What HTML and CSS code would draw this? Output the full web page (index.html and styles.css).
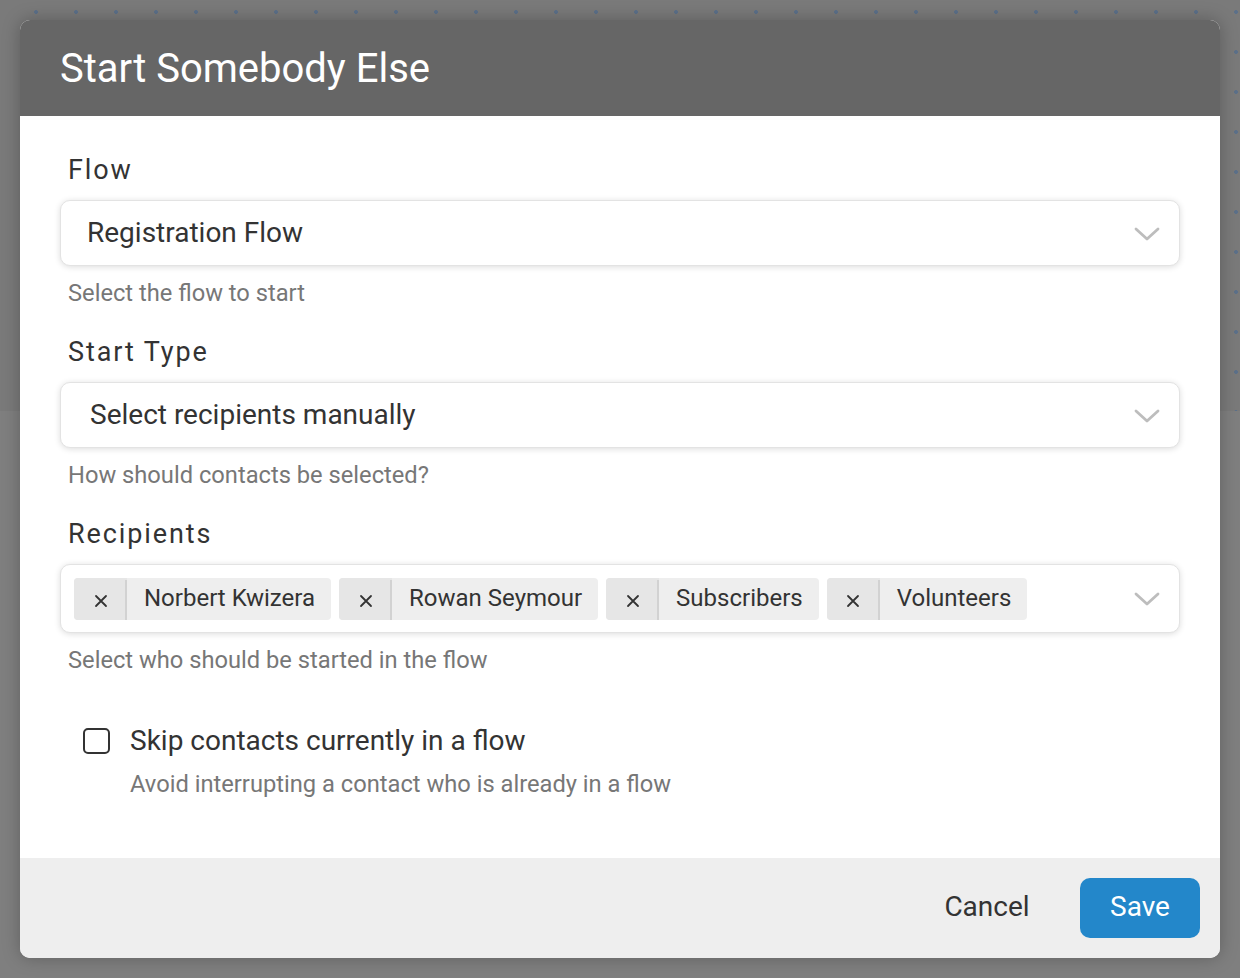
FILE: index.html
```html
<!DOCTYPE html>
<html>
<head>
<meta charset="utf-8">
<link rel="stylesheet" href="styles.css">
</head>
<body>
<div class="dialog">
  <div class="dialog-header">Start Somebody Else</div>
  <div class="dialog-body">
    <div class="field">
      <div class="field-label">Flow</div>
      <div class="select">
        <span class="select-value">Registration Flow</span>
        <svg class="chevron" width="26" height="15" viewBox="0 0 26 15"><polyline points="2,2 13,12 24,2" fill="none" stroke="#bdbdbd" stroke-width="2.8" stroke-linecap="round" stroke-linejoin="round"/></svg>
      </div>
      <div class="help">Select the flow to start</div>
    </div>
    <div class="field">
      <div class="field-label">Start Type</div>
      <div class="select">
        <span class="select-value alt">Select recipients manually</span>
        <svg class="chevron" width="26" height="15" viewBox="0 0 26 15"><polyline points="2,2 13,12 24,2" fill="none" stroke="#bdbdbd" stroke-width="2.8" stroke-linecap="round" stroke-linejoin="round"/></svg>
      </div>
      <div class="help">How should contacts be selected?</div>
    </div>
    <div class="field">
      <div class="field-label">Recipients</div>
      <div class="select multi">
        <div class="chips">
          <div class="chip"><span class="chip-x"><svg width="14" height="14" viewBox="0 0 14 14"><path d="M2 2L12 12M12 2L2 12" stroke="#333" stroke-width="1.8" stroke-linecap="round"/></svg></span><span class="chip-text">Norbert Kwizera</span></div>
          <div class="chip"><span class="chip-x"><svg width="14" height="14" viewBox="0 0 14 14"><path d="M2 2L12 12M12 2L2 12" stroke="#333" stroke-width="1.8" stroke-linecap="round"/></svg></span><span class="chip-text">Rowan Seymour</span></div>
          <div class="chip"><span class="chip-x"><svg width="14" height="14" viewBox="0 0 14 14"><path d="M2 2L12 12M12 2L2 12" stroke="#333" stroke-width="1.8" stroke-linecap="round"/></svg></span><span class="chip-text">Subscribers</span></div>
          <div class="chip"><span class="chip-x"><svg width="14" height="14" viewBox="0 0 14 14"><path d="M2 2L12 12M12 2L2 12" stroke="#333" stroke-width="1.8" stroke-linecap="round"/></svg></span><span class="chip-text">Volunteers</span></div>
        </div>
        <svg class="chevron" width="26" height="15" viewBox="0 0 26 15"><polyline points="2,2 13,12 24,2" fill="none" stroke="#bdbdbd" stroke-width="2.8" stroke-linecap="round" stroke-linejoin="round"/></svg>
      </div>
      <div class="help">Select who should be started in the flow</div>
    </div>
    <div class="check-field">
      <div class="check-row">
        <span class="checkbox"></span>
        <span class="check-label">Skip contacts currently in a flow</span>
      </div>
      <div class="help check-help">Avoid interrupting a contact who is already in a flow</div>
    </div>
  </div>
  <div class="dialog-footer">
    <button class="btn btn-cancel">Cancel</button>
    <button class="btn btn-save">Save</button>
  </div>
</div>
</body>
</html>
```
FILE: styles.css
```css
* { box-sizing: border-box; }
html, body { margin: 0; padding: 0; }
body {
  width: 1240px;
  height: 978px;
  padding: 20px;
  font-family: Roboto, "Liberation Sans", sans-serif;
  background-color: #7a7a7a;
  background-image:
    linear-gradient(transparent 0 411px, #7f7f7f 411px),
    radial-gradient(circle at 20px 20px, #5c7089 0 1.6px, transparent 2.2px);
  background-size: 100% 100%, 40px 40px;
  background-position: 0 0, 16px -8px;
  background-repeat: no-repeat, repeat;
  overflow: hidden;
}
.dialog {
  width: 1200px;
  height: 938px;
  background: #fff;
  border-radius: 10px;
  overflow: hidden;
  display: flex;
  flex-direction: column;
  box-shadow: 0 0 18px rgba(0,0,0,0.25);
}
.dialog-header {
  height: 96px;
  flex: none;
  background: #666666;
  color: #fff;
  font-size: 40px;
  padding-left: 40px;
  display: flex;
  align-items: center;
}
.dialog-body {
  flex: 1;
  padding: 38px 40px 0 40px;
}
.field { margin-bottom: 29px; }
.field-label {
  font-size: 27px;
  line-height: 32px;
  letter-spacing: 1.9px;
  color: #333;
  padding-left: 8px;
  margin-bottom: 14px;
}
.select {
  height: 66px;
  border: 1px solid #e3e3e3;
  border-radius: 10px;
  box-shadow: 0 1px 6px rgba(0,0,0,0.14);
  display: flex;
  align-items: center;
  padding: 0 19px 0 26px;
  background: #fff;
}
.select.multi { height: 69px; padding-left: 13px; }
.select-value {
  flex: 1;
  font-size: 28px;
  line-height: 32px;
  padding-bottom: 1px;
  color: #333;
}
.select-value.alt { padding-left: 3px; }
.chevron { flex: none; margin-top: 2px; }
.chips { flex: 1; display: flex; gap: 8px; }
.chip {
  height: 42px;
  display: flex;
  border-radius: 4px;
  overflow: hidden;
  background: #eeeeee;
}
.chip-x {
  width: 53px;
  background: #e6e6e6;
  display: flex;
  align-items: center;
  justify-content: center;
  position: relative;
}
.chip-x::after {
  content: "";
  position: absolute;
  right: 0; top: 2px; bottom: 0;
  width: 2px;
  background: #d2d2d2;
}
.chip-x svg { margin-top: 4px; }
.chip-text {
  display: flex;
  align-items: center;
  padding: 0 16px 1px 17px;
  font-size: 24px;
  color: #333;
}
.help {
  margin-top: 13px;
  font-size: 23.7px;
  line-height: 28px;
  color: #777;
  padding-left: 8px;
}
.check-field { margin-top: 51px; padding-left: 23px; }
.check-row { display: flex; align-items: center; height: 32px; }
.checkbox {
  width: 27px;
  height: 26px;
  border: 2.6px solid #333;
  border-radius: 5px;
  margin-right: 20px;
}
.check-label { font-size: 28px; line-height: 32px; padding-bottom: 1px; color: #333; }
.check-help { padding-left: 47px; margin-top: 13px; }
.dialog-footer {
  height: 100px;
  flex: none;
  background: #eeeeee;
  display: flex;
  align-items: center;
  justify-content: flex-end;
  padding-right: 20px;
  gap: 33px;
}
.btn {
  font-family: Roboto, "Liberation Sans", sans-serif;
  border: none;
  height: 60px;
  width: 120px;
  border-radius: 10px;
  font-size: 28px;
  padding: 0 0 3px 0;
  cursor: pointer;
}
.btn-cancel { background: transparent; color: #333; }
.btn-save { background: #2387ca; color: #fff; }
```
